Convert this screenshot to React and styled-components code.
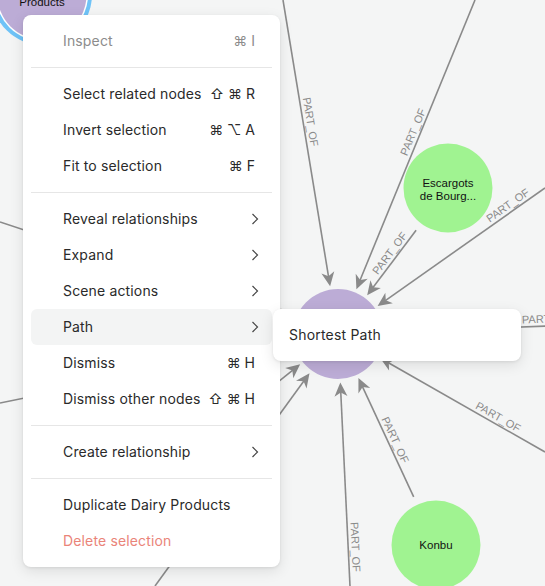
import React from "react";
import styled, { createGlobalStyle } from "styled-components";

const GlobalStyle = createGlobalStyle`
    body {
        margin: 0;
        background: #f4f5f5;
        font-family: Inter, "Liberation Sans", sans-serif;
    }
`;

const CENTER = { x: 338, y: 334, r: 45 };

const nodes = [
    { id: "escargots", x: 448, y: 188, r: 44.5, lines: ["Escargots", "de Bourg..."] },
    { id: "konbu", x: 436, y: 545, r: 44.5, lines: ["Konbu"] },
];

// src is either a point or a node id; label is the position along the edge
const edges = [
    { src: { x: 283, y: 0 }, label: 0.43 },
    { src: { x: 475, y: 0 }, label: 0.466 },
    { src: "escargots", label: 0.42 },
    { src: { x: 545, y: 188 }, label: 0.197 },
    { src: { x: 600, y: 324 }, label: 0.248 },
    { src: { x: 545, y: 452 }, label: 0.306 },
    { src: "konbu", label: 0.454 },
    { src: { x: 350, y: 586 }, label: 0.19 },
    { src: { x: 155, y: 586 } },
    { src: { x: 182, y: 459 } },
    { src: { x: 0, y: 222 } },
    { src: { x: 0, y: 403 } },
];

const edgeGeometry = (edge) => {
    const node = typeof edge.src === "string" ? nodes.find((n) => n.id === edge.src) : null;
    const from = node || edge.src;
    const dx = CENTER.x - from.x;
    const dy = CENTER.y - from.y;
    const len = Math.hypot(dx, dy);
    const ux = dx / len;
    const uy = dy / len;
    const start = node ? { x: from.x + ux * (node.r + 8.5), y: from.y + uy * (node.r + 8.5) } : from;
    const tip = { x: CENTER.x - ux * 48.5, y: CENTER.y - uy * 48.5 };
    const angle = (Math.atan2(uy, ux) * 180) / Math.PI;
    return { start, tip, ux, uy, angle };
};

const Edge = ({ edge }) => {
    const { start, tip, ux, uy, angle } = edgeGeometry(edge);
    const lineEnd = { x: tip.x - ux * 9, y: tip.y - uy * 9 };
    let textAngle = angle;
    if (textAngle > 90) textAngle -= 180;
    if (textAngle < -90) textAngle += 180;
    const t = edge.label;
    return (
        <g>
            <line
                x1={start.x}
                y1={start.y}
                x2={lineEnd.x}
                y2={lineEnd.y}
                stroke="#8a8a8a"
                strokeWidth="1.6"
            />
            <path
                d="M0 0 L-14 -6.5 L-10 0 L-14 6.5 Z"
                fill="#8a8a8a"
                transform={`translate(${tip.x} ${tip.y}) rotate(${angle})`}
            />
            {t !== undefined && (
                <EdgeLabel
                    transform={`translate(${start.x + (tip.x - start.x) * t} ${start.y + (tip.y - start.y) * t}) rotate(${textAngle})`}
                    y="-3.5"
                >
                    PART_OF
                </EdgeLabel>
            )}
        </g>
    );
};

const Node = ({ node, fill }) => {
    const first = node.lines.length > 1 ? -1 : 4;
    return (
        <g>
            <circle cx={node.x} cy={node.y} r={node.r} fill={fill} />
            {node.lines.map((line, i) => (
                <NodeText key={line} x={node.x} y={node.y + first + i * 12.5}>
                    {line}
                </NodeText>
            ))}
        </g>
    );
};

const Chevron = () => (
    <ChevronIcon width="8" height="12" viewBox="0 0 8 12">
        <path d="M1.5 1 L6.5 6 L1.5 11" fill="none" stroke="#444" strokeWidth="1.2" />
    </ChevronIcon>
);

const menu = [
    [{ label: "Inspect", keys: "⌘ I", disabled: true }],
    [
        { label: "Select related nodes", keys: "⇧ ⌘ R" },
        { label: "Invert selection", keys: "⌘ ⌥ A" },
        { label: "Fit to selection", keys: "⌘ F" },
    ],
    [
        { label: "Reveal relationships", sub: true },
        { label: "Expand", sub: true },
        { label: "Scene actions", sub: true },
        { label: "Path", sub: true, open: true },
        { label: "Dismiss", keys: "⌘ H" },
        { label: "Dismiss other nodes", keys: "⇧ ⌘ H" },
    ],
    [{ label: "Create relationship", sub: true }],
    [{ label: "Duplicate Dairy Products" }, { label: "Delete selection", danger: true }],
];

const App = () => {
    return (
        <>
            <GlobalStyle />
            <Canvas>
                <Graph width="545" height="586" viewBox="0 0 545 586">
                    {edges.map((edge, i) => (
                        <Edge key={i} edge={edge} />
                    ))}
                    <circle cx={CENTER.x} cy={CENTER.y} r={CENTER.r} fill="#bcacd6" />
                    {nodes.map((node) => (
                        <Node key={node.id} node={node} fill="#a0f391" />
                    ))}
                    <circle cx="42" cy="-5" r="50" fill="#6fc3f7" />
                    <circle cx="42" cy="-5" r="46" fill="#ffffff" />
                    <circle cx="42" cy="-5" r="44.5" fill="#bcacd6" />
                    <NodeText x="42" y="-9">Dairy</NodeText>
                    <NodeText x="42" y="6">Products</NodeText>
                </Graph>

                <Menu>
                    {menu.map((group, gi) => (
                        <React.Fragment key={gi}>
                            {gi > 0 && <Divider />}
                            {group.map((item) => (
                                <Item
                                    key={item.label}
                                    $active={item.open}
                                    $tone={item.disabled ? "muted" : item.danger ? "danger" : "normal"}
                                >
                                    <ItemLabel>{item.label}</ItemLabel>
                                    {item.keys && <Shortcut>{item.keys}</Shortcut>}
                                    {item.sub && <Chevron />}
                                    {item.open && (
                                        <Submenu>
                                            <SubItem>Shortest Path</SubItem>
                                        </Submenu>
                                    )}
                                </Item>
                            ))}
                        </React.Fragment>
                    ))}
                </Menu>
            </Canvas>
        </>
    );
};

const Canvas = styled.div`
    position: relative;
    width: 545px;
    height: 586px;
    overflow: hidden;
    background: #f4f5f5;
`;

const Graph = styled.svg`
    display: block;
`;

const EdgeLabel = styled.text`
    font-family: "Liberation Sans", Arial, sans-serif;
    font-size: 11px;
    fill: #8a8a8a;
    text-anchor: middle;
`;

const NodeText = styled.text`
    font-family: "Liberation Sans", Arial, sans-serif;
    font-size: 11.5px;
    fill: #111;
    text-anchor: middle;
`;

const Menu = styled.div`
    position: absolute;
    left: 23px;
    top: 15px;
    width: 257px;
    box-sizing: border-box;
    padding: 8px;
    background: #fff;
    border-radius: 8px;
    box-shadow: 0 4px 14px rgba(0, 0, 0, 0.1), 0 1px 3px rgba(0, 0, 0, 0.08);
`;

const toneColors = {
    normal: "#2a2a2a",
    muted: "#8c8c8c",
    danger: "#ea8479",
};

const Item = styled.div`
    position: relative;
    display: flex;
    align-items: center;
    box-sizing: border-box;
    height: 36px;
    padding: 0 13px 2px 32px;
    border-radius: 6px;
    font-size: 14px;
    letter-spacing: 0.15px;
    color: ${({ $tone }) => toneColors[$tone]};
    background: ${({ $active }) => ($active ? "#f3f4f4" : "transparent")};
`;

const ItemLabel = styled.span`
    flex: 1;
    white-space: nowrap;
`;

const Shortcut = styled.span`
    margin-right: 4px;
    font-family: Inter, "DejaVu Sans", sans-serif;
    font-size: 14px;
    letter-spacing: 0;
    white-space: nowrap;
`;

const ChevronIcon = styled.svg`
    display: block;
    flex: none;
    margin-top: 2px;
`;

const Divider = styled.div`
    height: 1px;
    margin: 8px 0;
    background: #e6e6e6;
`;

const Submenu = styled.div`
    position: absolute;
    left: calc(100% + 1px);
    top: 0;
    width: 248px;
    box-sizing: border-box;
    padding: 8px;
    background: #fff;
    border-radius: 8px;
    letter-spacing: 0.2px;
    box-shadow: 0 4px 14px rgba(0, 0, 0, 0.1), 0 1px 3px rgba(0, 0, 0, 0.08);
`;

const SubItem = styled.div`
    display: flex;
    align-items: center;
    box-sizing: border-box;
    height: 36px;
    padding: 0 8px 1px;
    font-size: 14px;
    color: #2a2a2a;
`;

export default App;
